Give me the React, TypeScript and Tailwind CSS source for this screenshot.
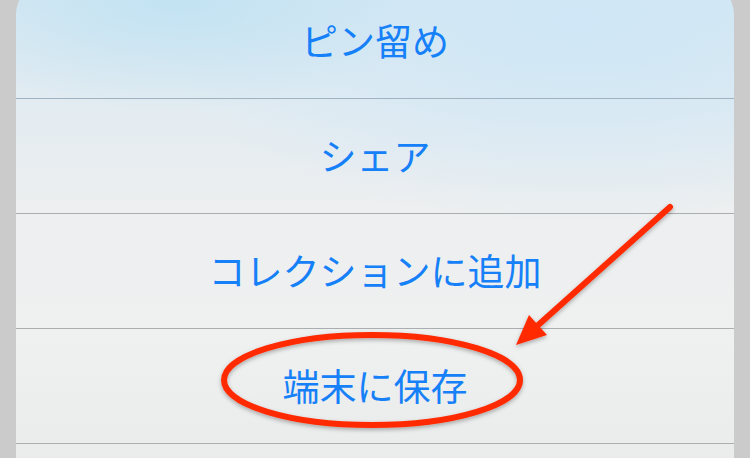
const items = ["ピン留め", "シェア", "コレクションに追加", "端末に保存"];

export default function App() {
  return (
    <div className="relative h-[458px] w-[750px] overflow-hidden bg-[#cbcbcb] px-4">
      <div className="-mt-[16px] overflow-hidden rounded-t-[30px] bg-[radial-gradient(ellipse_260px_110px_at_160px_17px,rgba(192,226,242,0.9),transparent),radial-gradient(ellipse_420px_200px_at_560px_40px,rgba(205,230,246,0.9),transparent),linear-gradient(180deg,#d6e8f3_0%,#e4ecf1_28%,#edeff0_45%,#eff0f0_70%,#e9eaea_100%)] font-['Noto_Sans_CJK_JP','Noto_Sans',sans-serif]">
        {items.map((label, i) => (
          <div
            key={i}
            className={`flex h-[115px] items-center justify-center border-b text-[37px] font-normal text-[#1580f8] ${
              i === 0 ? "border-[#9fb3c3]" : "border-[#abaeb0]"
            }`}
          >
            {label}
          </div>
        ))}
        <div className="h-[40px]" />
      </div>

      <svg className="pointer-events-none absolute inset-0" width="750" height="458" viewBox="0 0 750 458">
        <defs>
          <filter id="sh" x="-10%" y="-10%" width="120%" height="130%">
            <feDropShadow dx="0" dy="2" stdDeviation="2" floodColor="#000" floodOpacity="0.3" />
          </filter>
        </defs>
        <g filter="url(#sh)">
          <ellipse cx="372" cy="380" rx="148" ry="45" fill="none" stroke="#ff2a00" strokeWidth="6" />
          <line x1="670" y1="207" x2="536" y2="327" stroke="#ff2a00" strokeWidth="6" strokeLinecap="round" />
          <polygon points="516,345 529,315 547,335" fill="#ff2a00" />
        </g>
      </svg>
    </div>
  );
}
